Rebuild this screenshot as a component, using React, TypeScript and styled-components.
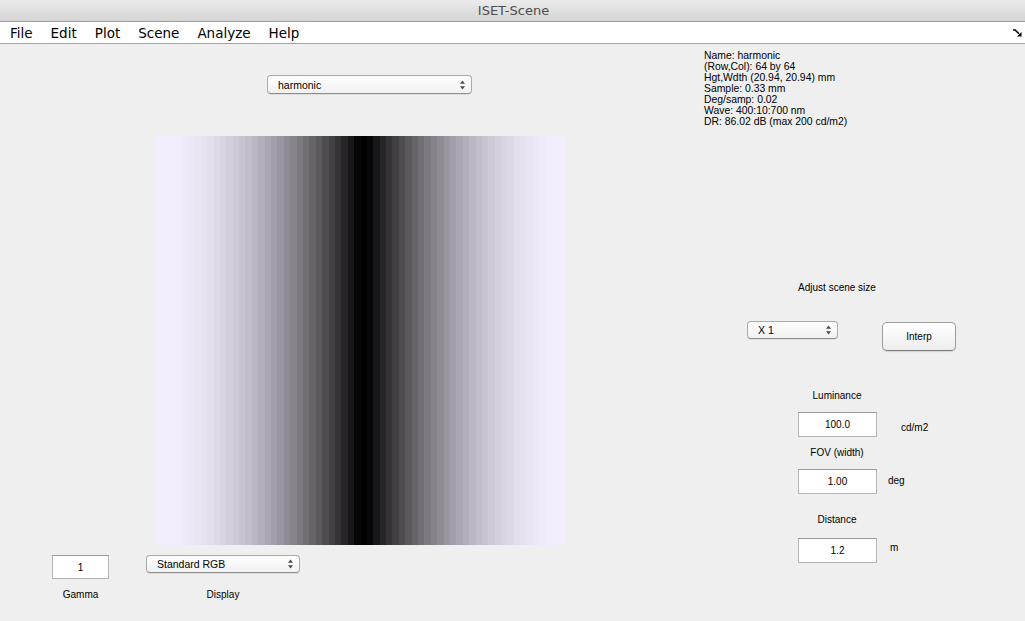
import React from "react"
import styled, { createGlobalStyle } from "styled-components"

const GlobalStyle = createGlobalStyle`
  html, body {
    margin: 0;
    padding: 0;
    background: #efefef;
  }
  body {
    font-family: "Liberation Sans", Arial, sans-serif;
    color: #000;
  }
`

const MENU_ITEMS = ["File", "Edit", "Plot", "Scene", "Analyze", "Help"]

const INFO_LINES = [
  "Name: harmonic",
  "(Row,Col): 64 by 64",
  "Hgt,Wdth (20.94, 20.94) mm",
  "Sample: 0.33 mm",
  "Deg/samp: 0.02",
  "Wave: 400:10:700 nm",
  "DR: 86.02 dB (max 200 cd/m2)",
]

// sRGB encoding of a linear value, as the display would show it
const srgb = (v: number) =>
  v <= 0.0031308 ? 12.92 * v : 1.055 * Math.pow(v, 1 / 2.4) - 0.055

const STRIPES = Array.from({ length: 64 }, (_, c) => {
  const level = 0.5 * (1 + Math.cos((2 * Math.PI * c) / 64))
  const s = srgb(level)
  return `rgb(${Math.round(244 * s)},${Math.round(237 * s)},${Math.round(
    253 * s
  )})`
})

const Window = styled.div`
  width: 1025px;
  height: 621px;
  display: flex;
  flex-direction: column;
  background: #efefef;
  overflow: hidden;
`

const TitleBar = styled.div`
  box-sizing: border-box;
  height: 22px;
  display: flex;
  align-items: center;
  justify-content: center;
  background: linear-gradient(#ececec, #d4d4d4);
  border-bottom: 1px solid #9c9c9c;
`

const Title = styled.span`
  font-family: "DejaVu Sans", sans-serif;
  font-size: 13px;
  color: #4d4d4d;
  margin-left: 2px;
`

const MenuBar = styled.div`
  box-sizing: border-box;
  height: 22px;
  display: flex;
  align-items: center;
  justify-content: space-between;
  padding: 0 3px 0 10px;
  background: #fff;
  border-bottom: 1px solid #a3a3a3;
`

const MenuList = styled.div`
  display: flex;
  gap: 18px;
`

const MenuItem = styled.span`
  font-family: "DejaVu Sans", sans-serif;
  font-size: 13.5px;
  color: #000;
`

const Body = styled.div`
  flex: 1;
  display: flex;
`

const LeftPane = styled.div`
  width: 700px;
  display: flex;
  flex-direction: column;
  align-items: flex-start;
`

const RightPane = styled.div`
  flex: 1;
  display: flex;
  flex-direction: column;
  align-items: flex-start;
  padding: 6px 0 0 4px;
`

const PopupBox = styled.div<{ $width: number; $height: number }>`
  box-sizing: border-box;
  width: ${(p) => p.$width}px;
  height: ${(p) => p.$height}px;
  display: flex;
  align-items: center;
  justify-content: space-between;
  padding: 0 6px 0 10px;
  border: 1px solid #a9a9a9;
  border-bottom-color: #8f8f8f;
  border-radius: 4px;
  background: linear-gradient(#ffffff, #f1f1f1);
  box-shadow: 0 1px 0 rgba(0, 0, 0, 0.08);
  font-size: 10.5px;
`

const SceneSelect = styled(PopupBox)`
  margin: 31px 0 0 267px;
`

const SceneImage = styled.div`
  width: 409px;
  height: 409px;
  margin: 42px 0 0 156px;
  display: grid;
  grid-template-columns: repeat(64, 1fr);
`

const Stripe = styled.div<{ $color: string }>`
  background: ${(p) => p.$color};
`

const BottomGrid = styled.div`
  margin: 10px 0 0 52px;
  display: grid;
  grid-template-columns: 57px 154px;
  column-gap: 37px;
  row-gap: 10px;
  align-items: start;
`

const EditBox = styled.div<{ $width: number; $height: number }>`
  box-sizing: border-box;
  width: ${(p) => p.$width}px;
  height: ${(p) => p.$height}px;
  display: flex;
  align-items: center;
  justify-content: center;
  background: #fff;
  border: 1px solid #b4b4b4;
  border-top-color: #9a9a9a;
  font-size: 10px;
`

const Caption = styled.div`
  font-size: 10px;
  line-height: 12px;
  text-align: center;
`

const InfoText = styled.div`
  font-size: 10.4px;
  line-height: 11px;
  white-space: pre;
`

const Controls = styled.div`
  margin-left: 43px;
  display: flex;
  flex-direction: column;
  align-items: flex-start;
`

const CenteredLabel = styled.div<{ $top: number }>`
  width: 180px;
  margin-top: ${(p) => p.$top}px;
  font-size: 10px;
  line-height: 12px;
  text-align: center;
`

const SizeRow = styled.div`
  margin-top: 27px;
  display: flex;
  align-items: flex-start;
  gap: 44px;
`

const PushButton = styled.div`
  box-sizing: border-box;
  width: 74px;
  height: 29px;
  margin-top: 1px;
  display: flex;
  align-items: center;
  justify-content: center;
  border: 1px solid #9d9d9d;
  border-bottom-color: #7f7f7f;
  border-radius: 5px;
  background: linear-gradient(#ffffff, #ededed);
  box-shadow: 0 1px 1px rgba(0, 0, 0, 0.12);
  font-size: 10px;
`

const FieldRow = styled.div<{ $gap: number }>`
  margin: ${(p) => p.$gap}px 0 0 51px;
  display: flex;
  align-items: flex-start;
`

const Unit = styled.span<{ $left: number; $top: number }>`
  margin: ${(p) => p.$top}px 0 0 ${(p) => p.$left}px;
  font-size: 10px;
  line-height: 12px;
`

const Arrows = () => (
  <svg width="5" height="10" viewBox="0 0 5 10">
    <path d="M2.5 0.5 L5 3.8 H0 Z" fill="#4a4a4a" />
    <path d="M2.5 9.5 L5 6.2 H0 Z" fill="#4a4a4a" />
  </svg>
)

const DockIcon = () => (
  <svg width="9" height="8" viewBox="0 0 9 8">
    <path d="M0 1 H2.2 L6 4.8" stroke="#000" strokeWidth="1.6" fill="none" />
    <path d="M8.5 7.5 V3 L4 7.5 Z" fill="#000" />
  </svg>
)

interface PopupProps {
  label: string
  width: number
  height: number
}

const Popup = ({ label, width, height }: PopupProps) => (
  <PopupBox $width={width} $height={height}>
    <span>{label}</span>
    <Arrows />
  </PopupBox>
)

interface FieldProps {
  label: string
  labelTop: number
  gap: number
  value: string
  unit: string
  unitLeft: number
  unitTop: number
}

const Field = ({ label, labelTop, gap, value, unit, unitLeft, unitTop }: FieldProps) => (
  <>
    <CenteredLabel $top={labelTop}>{label}</CenteredLabel>
    <FieldRow $gap={gap}>
      <EditBox $width={79} $height={25}>
        {value}
      </EditBox>
      <Unit $left={unitLeft} $top={unitTop}>
        {unit}
      </Unit>
    </FieldRow>
  </>
)

export default function App() {
  return (
    <Window>
      <GlobalStyle />
      <TitleBar>
        <Title>ISET-Scene</Title>
      </TitleBar>
      <MenuBar>
        <MenuList>
          {MENU_ITEMS.map((item) => (
            <MenuItem key={item}>{item}</MenuItem>
          ))}
        </MenuList>
        <DockIcon />
      </MenuBar>

      <Body>
        <LeftPane>
          <SceneSelect $width={205} $height={19}>
            <span>harmonic</span>
            <Arrows />
          </SceneSelect>

          <SceneImage>
            {STRIPES.map((c, i) => (
              <Stripe key={i} $color={c} />
            ))}
          </SceneImage>

          <BottomGrid>
            <EditBox $width={57} $height={24}>
              1
            </EditBox>
            <Popup label="Standard RGB" width={154} height={18} />
            <Caption>Gamma</Caption>
            <Caption>Display</Caption>
          </BottomGrid>
        </LeftPane>

        <RightPane>
          <InfoText>{INFO_LINES.join("\n")}</InfoText>

          <Controls>
            <CenteredLabel $top={155}>Adjust scene size</CenteredLabel>
            <SizeRow>
              <Popup label="X 1" width={91} height={18} />
              <PushButton>Interp</PushButton>
            </SizeRow>

            <Field
              label="Luminance"
              labelTop={39}
              gap={10}
              value="100.0"
              unit="cd/m2"
              unitLeft={24}
              unitTop={10}
            />
            <Field
              label="FOV (width)"
              labelTop={10}
              gap={10}
              value="1.00"
              unit="deg"
              unitLeft={11}
              unitTop={6}
            />
            <Field
              label="Distance"
              labelTop={20}
              gap={12}
              value="1.2"
              unit="m"
              unitLeft={13}
              unitTop={4}
            />
          </Controls>
        </RightPane>
      </Body>
    </Window>
  )
}
